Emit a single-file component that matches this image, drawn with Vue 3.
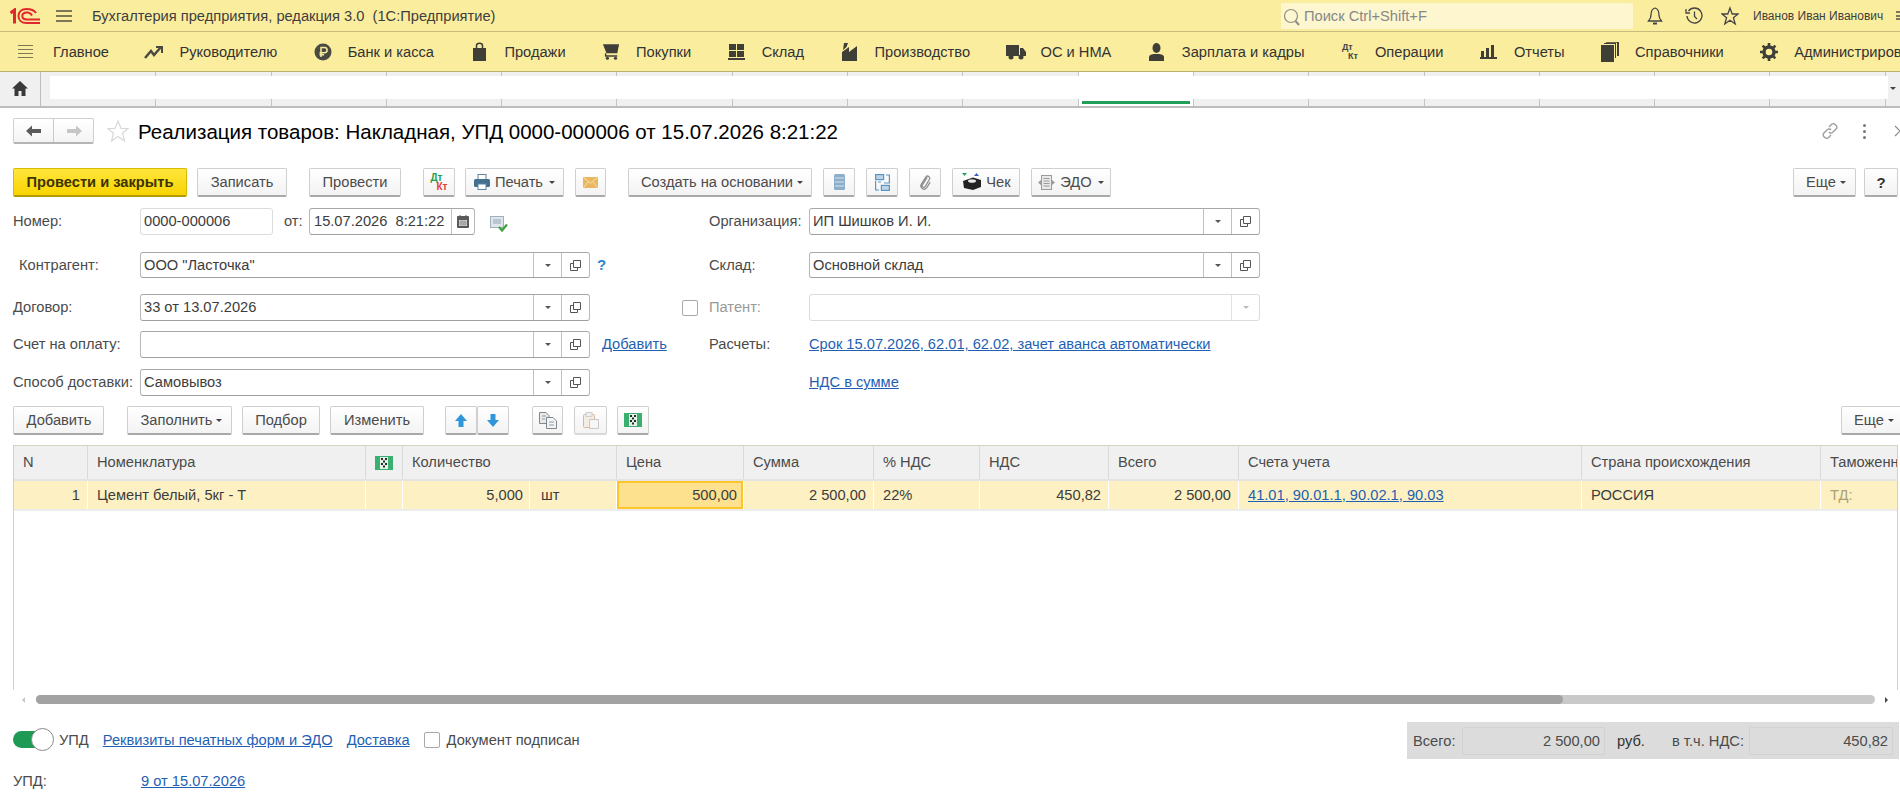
<script setup>
const navItems = [
  { label: 'Руководителю', icon: 'trend' },
  { label: 'Банк и касса', icon: 'bank' },
  { label: 'Продажи', icon: 'bag' },
  { label: 'Покупки', icon: 'cart' },
  { label: 'Склад', icon: 'grid' },
  { label: 'Производство', icon: 'factory' },
  { label: 'ОС и НМА', icon: 'truck' },
  { label: 'Зарплата и кадры', icon: 'person' },
  { label: 'Операции', icon: 'dtkt' },
  { label: 'Отчеты', icon: 'bars' },
  { label: 'Справочники', icon: 'books' },
  { label: 'Администрирование', icon: 'gear' }
]
const tabs = Array.from({ length: 16 }, (_, i) => i)
</script>

<template>
  <div class="page">
    <header class="titlebar">
      <svg class="logo" width="30" height="16" viewBox="0 0 30 16" fill="none" stroke="#e1282e">
        <path d="M0.5 5 L4.5 2 V15.5" stroke-width="3" />
        <path d="M26 5 C24 2 20 1 16.5 1 C11.5 1 8.5 4 8.5 8 C8.5 12 11.5 15 16.5 15 H30" stroke-width="2" />
        <path d="M22 7.5 C21 5.5 19 4.5 17 4.5 C14 4.5 12.3 6 12.3 8 C12.3 10 14 11.5 17 11.5 H30" stroke-width="2" />
      </svg>
      <span class="burger"><i></i><i></i><i></i></span>
      <span class="apptitle">Бухгалтерия предприятия, редакция 3.0&nbsp; (1С:Предприятие)</span>
      <div class="search">
        <svg width="18" height="20" viewBox="0 0 18 20" fill="none" stroke="#8f8f80" stroke-width="1.2"><circle cx="8" cy="9" r="6.5" /><path d="M12.5 14 L16 18" stroke-width="2" /></svg>
        <span>Поиск Ctrl+Shift+F</span>
      </div>
      <svg class="tb-ic bell" width="16" height="20" viewBox="0 0 16 20" fill="none" stroke="#444" stroke-width="1.3"><path d="M8 2 C4.5 3 4 6 4 9 C4 12 3 13 1.5 15 H14.5 C13 13 12 12 12 9 C12 6 11.5 3 8 2 Z" /><path d="M6 17.5 H10" stroke-width="2" /></svg>
      <svg class="tb-ic hist" width="18" height="20" viewBox="0 0 18 20" fill="none" stroke="#444" stroke-width="1.3"><path d="M3.5 5 A7.5 7.5 0 1 1 2 10" /><path d="M1 3 V7 H5" /><path d="M9.5 5.5 V10.5 L12 13" /></svg>
      <svg class="tb-ic star" width="18" height="20" viewBox="0 0 18 20" fill="none" stroke="#444" stroke-width="1.3"><path d="M9 2 L11.2 8 H17 L12.4 11.8 L14.2 18 L9 14.3 L3.8 18 L5.6 11.8 L1 8 H6.8 Z" /></svg>
      <span class="user">Иванов Иван Иванович</span>
      <span class="burger small"><i></i><i></i><i></i></span>
    </header>

    <nav class="navbar">
      <div class="navitem first">
        <span class="burger nav"><i></i><i></i><i></i><i></i></span>
        <span>Главное</span>
      </div>
      <div v-for="item in navItems" :key="item.label" class="navitem">
        <span class="navicon">
          <svg v-if="item.icon === 'trend'" width="20" height="16" viewBox="0 0 20 16" fill="none" stroke="#4a4a42" stroke-width="2.4"><path d="M1 14 L7 7 L10 11 L17 3" /><path d="M12 3 H18 V9" stroke-width="2" /></svg>
          <svg v-else-if="item.icon === 'bank'" width="18" height="18" viewBox="0 0 18 18"><circle cx="9" cy="9" r="8.5" fill="#4a4a42" /><path d="M7 14 V4.5 H10.5 A2.6 2.6 0 0 1 10.5 9.7 H5.5 M5.5 11.8 H10" stroke="#fbed9e" stroke-width="1.5" fill="none" /></svg>
          <svg v-else-if="item.icon === 'bag'" width="15" height="20" viewBox="0 0 15 20"><path d="M1 6 H14 V19 H1 Z" fill="#3f3f38" /><path d="M4.5 8 V3.5 C4.5 0.5 10.5 0.5 10.5 3.5 V8" stroke="#3f3f38" stroke-width="1.5" fill="none" /></svg>
          <svg v-else-if="item.icon === 'cart'" width="18" height="19" viewBox="0 0 20 20"><path d="M1 2 H19 L17 12 H5 Z" fill="#3f3f38" /><path d="M4 12 V15 H17" stroke="#3f3f38" stroke-width="1.5" fill="none" /><circle cx="6" cy="17.5" r="1.8" fill="#3f3f38" /><circle cx="15" cy="17.5" r="1.8" fill="#3f3f38" /></svg>
          <svg v-else-if="item.icon === 'grid'" width="17" height="18" viewBox="0 0 17 18" fill="#3f3f38"><rect x="1" y="1" width="7" height="6" /><rect x="9" y="1" width="7" height="6" /><rect x="1" y="8" width="7" height="6" /><rect x="9" y="8" width="7" height="6" /><rect x="0" y="15" width="17" height="2" /></svg>
          <svg v-else-if="item.icon === 'factory'" width="17" height="18" viewBox="0 0 17 18" fill="#3f3f38"><path d="M1 18 V9 L8 4 V9 L16 3 V18 Z" /><path d="M2 7 L3 0 H7 L5.5 4 Z" /></svg>
          <svg v-else-if="item.icon === 'truck'" width="20" height="16" viewBox="0 0 20 16" fill="#3f3f38"><rect x="0" y="1" width="13" height="11" /><path d="M14 4 H17 L20 8 V12 H14 Z" /><circle cx="5" cy="13" r="2.5" /><circle cx="15" cy="13" r="2.5" /></svg>
          <svg v-else-if="item.icon === 'person'" width="15" height="18" viewBox="0 0 15 18" fill="#3f3f38"><ellipse cx="7.5" cy="5" rx="4" ry="5" /><path d="M0 18 V14 C0 11.5 4 11 7.5 11 C11 11 15 11.5 15 14 V18 Z" /></svg>
          <span v-else-if="item.icon === 'dtkt'" class="dtkt nav"><b>Дт</b><b>Кт</b></span>
          <svg v-else-if="item.icon === 'bars'" width="17" height="15" viewBox="0 0 17 15" fill="#3f3f38"><rect x="1" y="7" width="3" height="6" /><rect x="6" y="4" width="3" height="9" /><rect x="11" y="1" width="3" height="12" /><rect x="0" y="13" width="17" height="2" /></svg>
          <svg v-else-if="item.icon === 'books'" width="18" height="20" viewBox="0 0 18 20" fill="#3f3f38"><rect x="0" y="3" width="13" height="17" /><path d="M3 2 V1 H15 V16 H14 V2 Z M5 0 H18 V14 H16 V0.8 H5 Z" /></svg>
          <svg v-else-if="item.icon === 'gear'" width="18" height="18" viewBox="0 0 18 18"><circle cx="9" cy="9" r="5" fill="none" stroke="#3f3f38" stroke-width="3.4" /><path d="M9 0 V18 M0 9 H18 M2.6 2.6 L15.4 15.4 M15.4 2.6 L2.6 15.4" stroke="#3f3f38" stroke-width="2.6" stroke-dasharray="3.2 11.6" /></svg>
        </span>
        <span>{{ item.label }}</span>
      </div>
    </nav>

    <div class="tabsbar">
      <div class="home">
        <svg width="16" height="15" viewBox="0 0 16 15" fill="#3a3a3a"><path d="M8 0 L16 7.5 H13.5 V15 H9.5 V10 H6.5 V15 H2.5 V7.5 H0 Z" /></svg>
      </div>
      <div v-for="t in tabs" :key="t" class="tab" :class="{ active: t === 9 }"></div>
      <div class="tabstrip"></div>
      <span class="tabcaret"></span>
    </div>

    <main class="doc">
      <div class="dochead">
        <div class="navgroup">
          <span class="ng back"><svg width="16" height="12" viewBox="0 0 16 12" fill="#5a5a5a"><path d="M0 6 L6 0.5 V4 H15 V8 H6 V11.5 Z" /></svg></span>
          <span class="ng"><svg width="16" height="12" viewBox="0 0 16 12" fill="#c6c6c6"><path d="M16 6 L10 0.5 V4 H1 V8 H10 V11.5 Z" /></svg></span>
        </div>
        <svg class="favstar" width="22" height="22" viewBox="0 0 22 22" fill="none" stroke="#d8d8d8" stroke-width="1.2"><path d="M11 1 L14 8.5 H21 L15.5 13.2 L17.5 21 L11 16.4 L4.5 21 L6.5 13.2 L1 8.5 H8 Z" /></svg>
        <h1 class="doctitle">Реализация товаров: Накладная, УПД 0000-000006 от 15.07.2026 8:21:22</h1>
        <div class="headicons">
          <svg width="18" height="18" viewBox="0 0 18 18" fill="none" stroke="#9a9a9a" stroke-width="1.3"><path d="M8 5 L11 2 C13 0.5 17 4 15.5 6.5 L11.5 10.5 C10 11.5 8.5 11 8 10" /><path d="M10 13 L7 16 C5 17.5 1 14 2.5 11.5 L6.5 7.5 C8 6.5 9.5 7 10 8" /></svg>
          <span class="kebab"><i></i><i></i><i></i></span>
          <svg class="closex" width="14" height="14" viewBox="0 0 14 14" stroke="#8a8a8a" stroke-width="1.2"><path d="M2 2 L12 12 M12 2 L2 12" /></svg>
        </div>
      </div>

      <div class="cmdbar">
        <button class="btn primary w-post">Провести и закрыть</button>
        <button class="btn w-save">Записать</button>
        <button class="btn w-run">Провести</button>
        <button class="btn icon w-dt"><span class="dtkt"><b class="g">Дт</b><b class="r">Кт</b></span></button>
        <button class="btn w-print">
          <svg width="16" height="16" viewBox="0 0 16 16"><rect x="4" y="0.5" width="8" height="5" fill="#fff" stroke="#5f86a3" /><rect x="0" y="5" width="16" height="8" rx="1.5" fill="#44708f" /><rect x="4" y="10" width="8" height="5.5" fill="#fff" stroke="#5f86a3" /></svg>
          Печать<i class="caret"></i>
        </button>
        <button class="btn icon w-mail"><svg width="15" height="11" viewBox="0 0 15 11"><rect width="15" height="11" fill="#e8b75f" /><path d="M0.5 0.5 L7.5 6 L14.5 0.5 M0.5 10.5 L5.5 4.5 M14.5 10.5 L9.5 4.5" stroke="#f8e2b0" fill="none" /></svg></button>
        <button class="btn w-create">Создать на основании<i class="caret"></i></button>
        <button class="btn icon w-ic"><svg width="11" height="16" viewBox="0 0 11 16"><rect width="11" height="16" rx="1.5" fill="#8bafca" /><path d="M1 4 H10 M1 8 H10 M1 12 H10" stroke="#d6e3ed" /></svg></button>
        <button class="btn icon w-ic2"><svg width="15" height="17" viewBox="0 0 15 17" fill="none" stroke="#5b95c1" stroke-width="1.2"><rect x="0.6" y="0.6" width="8" height="5" fill="#bcd4e6" /><rect x="6.4" y="11.4" width="8" height="5" fill="#bcd4e6" /><path d="M11 1 H14.4 V9 H9 M0.6 7 V16 H4 M3 8 H6" /></svg></button>
        <button class="btn icon w-ic3"><svg width="13" height="17" viewBox="0 0 14 20" fill="none" stroke="#8f8f8f" stroke-width="1.5"><path d="M9 4 L3.5 12.5 C2 15 5 17 6.8 14.6 L11.5 6.5 C13 3.5 9.5 1 7.5 3.5 L2 12 C0 16 5 20.5 8.5 16 L12.5 9.5" /></svg></button>
        <button class="btn w-check">
          <svg width="22" height="20" viewBox="0 0 22 20"><path d="M1 1 L6 1 L3.5 4 Z" fill="#2aa05a" /><path d="M13 4 L18 4 L15.5 1 Z" fill="#3a5cc0" /><path d="M2 9 L12 5.5 L20 8 V15 L12 18 L3 16 Z" fill="#222" /><ellipse cx="11" cy="9" rx="4" ry="1.8" fill="#e8e8e8" /></svg>
          Чек
        </button>
        <button class="btn w-edo">
          <svg width="17" height="15" viewBox="0 0 17 15" fill="none" stroke="#9b9b9b"><rect x="3.5" y="0.5" width="10" height="14" fill="#e9e9e9" /><path d="M5.5 3.5 H11.5 M5.5 6 H11.5 M5.5 8.5 H11.5 M5.5 11 H11.5" /><path d="M0 7.5 L3 5 V10 Z M17 7.5 L14 5 V10 Z" fill="#9b9b9b" stroke="none" /></svg>
          ЭДО<i class="caret"></i>
        </button>
        <span class="spacer"></span>
        <button class="btn w-more">Еще<i class="caret"></i></button>
        <button class="btn w-help"><b>?</b></button>
      </div>

      <div class="fields">
        <label class="lbl">Номер:</label>
        <div class="inline">
          <div class="inp w-num">0000-000006</div>
          <span class="lbl from">от:</span>
          <div class="inp dark w-date">
            <span class="val">15.07.2026&nbsp; 8:21:22</span>
            <span class="cell"><svg width="12" height="13" viewBox="0 0 12 13"><rect y="1" width="12" height="12" rx="1" fill="#5a5a5a" /><rect x="2" y="5" width="8" height="6" fill="#ddd" /><path d="M3 0 V3 M9 0 V3" stroke="#5a5a5a" /><path d="M4 5 V11 M6 5 V11 M8 5 V11 M2 7 H10 M2 9 H10" stroke="#777" stroke-width=".6" /></svg></span>
          </div>
          <svg class="posted" width="18" height="16" viewBox="0 0 18 16"><rect x="0.5" y="0.5" width="13" height="11" fill="#dfe5ea" stroke="#9fb0bd" /><path d="M3 3 H11 V8 H3 Z" fill="#b8c6d1" /><path d="M9 11 L12 14.5 L17 8.5" stroke="#3ba33b" stroke-width="2.2" fill="none" /></svg>
        </div>
        <span></span>
        <label class="lbl">Организация:</label>
        <div class="inp dark"><span class="val">ИП Шишков И. И.</span><span class="cell"><i class="caret dk"></i></span><span class="cell"><svg class="open" width="11" height="11" viewBox="0 0 11 11" fill="none" stroke="#555"><path d="M3.5 0.5 H10.5 V7.5 H3.5 Z M3.5 3.5 H0.5 V10.5 H7.5 V7.5" /></svg></span></div>

        <label class="lbl indent">Контрагент:</label>
        <div class="inp dark short"><span class="val">ООО "Ласточка"</span><span class="cell"><i class="caret dk"></i></span><span class="cell"><svg class="open" width="11" height="11" viewBox="0 0 11 11" fill="none" stroke="#555"><path d="M3.5 0.5 H10.5 V7.5 H3.5 Z M3.5 3.5 H0.5 V10.5 H7.5 V7.5" /></svg></span></div>
        <span class="extra q">?</span>
        <label class="lbl">Склад:</label>
        <div class="inp dark short"><span class="val">Основной склад</span><span class="cell"><i class="caret dk"></i></span><span class="cell"><svg class="open" width="11" height="11" viewBox="0 0 11 11" fill="none" stroke="#555"><path d="M3.5 0.5 H10.5 V7.5 H3.5 Z M3.5 3.5 H0.5 V10.5 H7.5 V7.5" /></svg></span></div>

        <label class="lbl">Договор:</label>
        <div class="inp dark"><span class="val">33 от 13.07.2026</span><span class="cell"><i class="caret dk"></i></span><span class="cell"><svg class="open" width="11" height="11" viewBox="0 0 11 11" fill="none" stroke="#555"><path d="M3.5 0.5 H10.5 V7.5 H3.5 Z M3.5 3.5 H0.5 V10.5 H7.5 V7.5" /></svg></span></div>
        <span class="extra"><span class="check patent"></span></span>
        <label class="lbl muted">Патент:</label>
        <div class="inp disabled"><span class="val"></span><span class="cell lightcell"><i class="caret lt"></i></span></div>

        <label class="lbl">Счет на оплату:</label>
        <div class="inp dark"><span class="val"></span><span class="cell"><i class="caret dk"></i></span><span class="cell"><svg class="open" width="11" height="11" viewBox="0 0 11 11" fill="none" stroke="#555"><path d="M3.5 0.5 H10.5 V7.5 H3.5 Z M3.5 3.5 H0.5 V10.5 H7.5 V7.5" /></svg></span></div>
        <a class="link extra add">Добавить</a>
        <label class="lbl">Расчеты:</label>
        <a class="link tall">Срок 15.07.2026, 62.01, 62.02, зачет аванса автоматически</a>

        <label class="lbl">Способ доставки:</label>
        <div class="inp dark"><span class="val">Самовывоз</span><span class="cell"><i class="caret dk"></i></span><span class="cell"><svg class="open" width="11" height="11" viewBox="0 0 11 11" fill="none" stroke="#555"><path d="M3.5 0.5 H10.5 V7.5 H3.5 Z M3.5 3.5 H0.5 V10.5 H7.5 V7.5" /></svg></span></div>
        <span></span>
        <span></span>
        <a class="link tall">НДС в сумме</a>
      </div>

      <div class="tablebar">
        <button class="btn w-add">Добавить</button>
        <button class="btn w-fill">Заполнить<i class="caret"></i></button>
        <button class="btn w-pick">Подбор</button>
        <button class="btn w-edit">Изменить</button>
        <div class="pair">
          <button class="btn icon"><svg width="12" height="13" viewBox="0 0 12 13" fill="#2f97d9"><path d="M6 0 L12 7 H8.5 V13 H3.5 V7 H0 Z" /></svg></button>
          <button class="btn icon"><svg width="12" height="13" viewBox="0 0 12 13" fill="#2f97d9"><path d="M6 13 L12 6 H8.5 V0 H3.5 V6 H0 Z" /></svg></button>
        </div>
        <button class="btn icon w-copy"><svg width="18" height="17" viewBox="0 0 18 17" stroke="#7d8790"><path d="M0.5 0.5 H7 L10 3.5 V11.5 H0.5 Z" fill="#e9e9e9" /><path d="M7.5 5.5 H14 L17.5 9 V16.5 H7.5 Z" fill="#f4f4f4" /><path d="M3 4 H7 M3 7 H6 M10 10 H15 M10 13 H15" stroke-width=".8" /></svg></button>
        <button class="btn icon w-paste"><svg width="16" height="17" viewBox="0 0 16 17"><rect x="0.5" y="2.5" width="11" height="13" rx="1" fill="#f5ede4" stroke="#d9b79a" /><rect x="3" y="0.5" width="6" height="4" fill="#eee" stroke="#d0d0d0" /><path d="M6.5 7.5 H15.5 V16.5 H6.5 Z" fill="#f6f6f6" stroke="#c8c8c8" /></svg></button>
        <button class="btn icon w-code"><svg class="mark" width="18" height="14" viewBox="0 0 18 14"><rect width="18" height="14" fill="#39b06f" /><rect x="5" y="1" width="8" height="12" fill="#e4f0e8" /><path d="M6 2 H8 V4 H6 Z M10 2 H12 V4 H10 Z M8 4.5 H10 V6.5 H8 Z M6 7 H8 V9 H6 Z M10 7 H12 V9 H10 Z M8 9.5 H10 V11.5 H8 Z" fill="#1f2f27" /></svg></button>
        <span class="spacer"></span>
        <button class="btn w-more2">Еще<i class="caret"></i></button>
      </div>

      <section class="table">
        <div class="thead">
          <div class="th">N</div>
          <div class="th">Номенклатура</div>
          <div class="th ctr"><svg class="mark" width="18" height="14" viewBox="0 0 18 14"><rect width="18" height="14" fill="#39b06f" /><rect x="5" y="1" width="8" height="12" fill="#e4f0e8" /><path d="M6 2 H8 V4 H6 Z M10 2 H12 V4 H10 Z M8 4.5 H10 V6.5 H8 Z M6 7 H8 V9 H6 Z M10 7 H12 V9 H10 Z M8 9.5 H10 V11.5 H8 Z" fill="#1f2f27" /></svg></div>
          <div class="th">Количество</div>
          <div class="th">Цена</div>
          <div class="th">Сумма</div>
          <div class="th">% НДС</div>
          <div class="th">НДС</div>
          <div class="th">Всего</div>
          <div class="th">Счета учета</div>
          <div class="th">Страна происхождения</div>
          <div class="th">Таможенная декларация</div>
        </div>
        <div class="trow">
          <div class="td r">1</div>
          <div class="td">Цемент белый, 5кг - Т</div>
          <div class="td"></div>
          <div class="td qty"><span class="q1">5,000</span><span class="q2">шт</span></div>
          <div class="td r sel">500,00</div>
          <div class="td r">2 500,00</div>
          <div class="td">22%</div>
          <div class="td r">450,82</div>
          <div class="td r">2 500,00</div>
          <div class="td"><a class="link">41.01, 90.01.1, 90.02.1, 90.03</a></div>
          <div class="td">РОССИЯ</div>
          <div class="td faded">ТД:</div>
        </div>
      </section>

      <div class="hscroll">
        <i class="arrow l"></i>
        <div class="track"><div class="thumb"></div></div>
        <i class="arrow rt"></i>
      </div>

      <div class="footer">
        <div class="footleft">
          <span class="toggle"><span class="knob"></span></span>
          <span class="ftxt">УПД</span>
          <a class="link">Реквизиты печатных форм и ЭДО</a>
          <a class="link">Доставка</a>
          <span class="check"></span>
          <span class="ftxt tight">Документ подписан</span>
        </div>
        <div class="totals">
          <span class="tl t1">Всего:</span>
          <span class="tv w1">2 500,00</span>
          <span class="rub">руб.</span>
          <span class="tl vat">в т.ч. НДС:</span>
          <span class="tv w2">450,82</span>
        </div>
      </div>
      <div class="upd">
        <span class="lbl">УПД:</span>
        <a class="link">9 от 15.07.2026</a>
      </div>
    </main>
  </div>
</template>

<style>
html, body { margin: 0; overflow: hidden; background: #fff; }
</style>

<style scoped>
.page {
  width: 1900px; height: 797px; overflow: hidden; background: #fff;
  display: flex; flex-direction: column;
  font: 14.67px "Liberation Sans", Arial, sans-serif; color: #4b4b4b;
}
a { cursor: pointer; }
i { font-style: normal; display: block; }

.titlebar {
  height: 31px; flex: none; background: #fbed9e; border-bottom: 1px solid #c4bb7c;
  display: flex; align-items: center; color: #3e3e3e; position: relative;
}
.logo { margin-left: 10px; flex: none; }
.burger { display: flex; flex-direction: column; justify-content: space-between; width: 16px; height: 12px; margin-left: 16px; flex: none; }
.burger i { height: 2px; background: #7d7856; }
.burger.nav { margin: 0; height: 14px; width: 15px; }
.burger.nav i { height: 1.5px; }
.burger.small { margin-left: 13px; width: 8px; height: 9px; overflow: hidden; }
.apptitle { margin-left: 20px; width: 1189px; white-space: nowrap; flex: none; }
.search {
  width: 352px; height: 26px; background: #fdf6cf; border-radius: 2px; display: flex; align-items: center;
  margin-left: 0; color: #888; flex: none;
}
.search svg { margin: 2px 3px 0 2px; }
.bell { margin-left: 14px; }
.hist { margin-left: 22px; }
.star { margin-left: 18px; }
.tb-ic { flex: none; }
.user { margin-left: 14px; font-size: 12px; white-space: nowrap; flex: none; }

.navbar {
  height: 40px; flex: none; background: #fbed9e; border-bottom: 1px solid #b9b170; box-sizing: border-box;
  display: flex; align-items: center; padding-left: 18px; gap: 35.45px; white-space: nowrap; color: #333;
}
.navitem { display: flex; align-items: center; flex: none; }
.navitem.first { gap: 20px; }
.navicon { width: 20px; height: 20px; margin-right: 15px; display: flex; align-items: center; justify-content: center; }

.tabsbar {
  height: 36px; flex: none; display: flex; background: #f0f0f0; border-bottom: 2px solid #bdbdbd; box-sizing: border-box;
  position: relative;
}
.home { width: 40px; border-right: 1px solid #bdbdbd; display: flex; align-items: center; justify-content: center; flex: none; padding-bottom: 2px; }
.tab { width: 114.3px; flex: none; border-right: 1px solid #c4c4c4; position: relative; }
.tab.active { background: #fff; }
.tab.active::after { content: ""; position: absolute; left: 3px; right: 3px; bottom: 2px; height: 3px; background: #1ea05a; }
.tabstrip { position: absolute; left: 50px; top: 4px; width: 1838px; height: 23px; background: #fff; }
.tabcaret { position: absolute; right: 4px; top: 15px; border: 3px solid transparent; border-top-color: #444; }

.doc { flex: 1; display: flex; flex-direction: column; min-height: 0; padding-left: 13px; position: relative; }
.dochead { height: 60px; display: flex; align-items: flex-start; padding-top: 10px; box-sizing: border-box; flex: none; }
.navgroup {
  display: flex; width: 81px; height: 26px; box-sizing: border-box; border: 1px solid #d0d0d0; border-bottom: 2px solid #b5b5b5;
  border-radius: 2px; background: linear-gradient(#fff, #f4f4f4); flex: none;
}
.ng { flex: 1; display: flex; align-items: center; justify-content: center; }
.ng.back { border-right: 1px solid #c9c9c9; }
.favstar { margin-left: 13px; margin-top: 2px; flex: none; }
.doctitle { margin: 2px 0 0 9px; font-size: 20.5px; line-height: 23px; font-weight: 400; color: #000; white-space: nowrap; flex: none; }
.headicons { display: flex; align-items: center; gap: 0; position: absolute; right: 0; top: 14px; }
.kebab { display: flex; flex-direction: column; gap: 3px; margin: 0 0 0 24px; width: 3px; }
.kebab i { width: 3px; height: 3px; background: #777; border-radius: 50%; }
.closex { margin-left: 27px; margin-right: -7px; }

.btn {
  box-sizing: border-box; height: 29px; padding: 0; display: inline-flex; align-items: center; justify-content: center; gap: 5px;
  font: inherit; color: #4b4b4b; border: 1px solid #cfcfcf; border-bottom: 2px solid #a9a9a9; border-radius: 2px;
  background: linear-gradient(#fff, #f3f3f3); flex: none; white-space: nowrap;
}
.btn.primary { background: linear-gradient(#ffe63d, #f8d400); border-color: #d9b800; border-bottom-color: #b59a00; color: #3b3400; font-weight: 700; }
.caret { width: 0; height: 0; border: 3px solid transparent; border-top: 3px solid #444; border-bottom: 0; margin-left: 1px; }
.caret.dk { border-top-color: #555; }
.caret.lt { border-top-color: #bbb; }
.cmdbar { height: 29px; display: flex; flex: none; margin-top: 0; width: 1885px; }
.w-post { width: 174px; }
.w-save { width: 90px; margin-left: 10px; }
.w-run { width: 92px; margin-left: 22px; }
.w-dt { width: 32px; margin-left: 22px; }
.w-print { width: 99px; margin-left: 10px; }
.w-mail { width: 31px; margin-left: 11px; }
.w-create { width: 184px; margin-left: 22px; padding-left: 4px; gap: 3px; }
.w-ic { width: 32px; margin-left: 11px; }
.w-ic2 { width: 32px; margin-left: 11px; }
.w-ic3 { width: 32px; margin-left: 11px; }
.w-check { width: 68px; margin-left: 11px; gap: 3px; }
.w-edo { width: 80px; margin-left: 11px; }
.spacer { flex: 1; }
.w-more { width: 63px; padding-left: 3px; gap: 3px; }
.w-help { width: 34px; margin-left: 8px; color: #333; font-size: 15px; }
.dtkt { display: flex; flex-direction: column; font-size: 10px; line-height: 9px; align-items: flex-start; }
.dtkt b:last-child { margin-left: 6px; }
.dtkt .g { color: #24a148; }
.dtkt .r { color: #e2413a; }
.dtkt.nav { color: #444; font-size: 9px; }

.fields {
  display: grid; margin-top: 11px; flex: none;
  grid-template-columns: 127px 450px 119px 100px 451px;
  grid-template-rows: 44px 42px 37px 38px 27px;
  width: 1247px;
}
.lbl { line-height: 27px; color: #4b4b4b; white-space: nowrap; }
.lbl.indent { padding-left: 6px; }
.lbl.muted { color: #999; }
.inline { display: flex; align-items: flex-start; }
.inp {
  box-sizing: border-box; height: 27px; border: 1px solid #d2d2d2; border-radius: 3px; display: flex; align-items: stretch; line-height: 25px; color: #3c3c3c;
  background: #fff;
}
.inp.short { height: 26px; line-height: 24px; }
.inp.dark { border-color: #a8a8a8 #b8b8b8 #a0a0a0; }
.inp.disabled { border-color: #dcdcdc; }
.val { flex: 1; padding-left: 3px; white-space: nowrap; overflow: hidden; }
.cell { width: 27px; border-left: 1px solid #c0c0c0; display: flex; align-items: center; justify-content: center; flex: none; }
.lightcell { border-left-color: #e2e2e2; }
.w-num { width: 133px; padding-left: 3px; border-color: #dcdcdc; box-shadow: none; }
.from { margin-left: 11px; width: 25px; }
.w-date { width: 166px; }
.w-date .val { padding-left: 4px; }
.w-date .cell { width: 22px; }
.posted { margin: 8px 0 0 15px; }
.extra { line-height: 27px; }
.q { color: #2a86d0; font-weight: 700; padding-left: 7px; line-height: 26px; font-size: 15px; }
.link { color: #1f5fb4; text-decoration: underline; white-space: nowrap; }
.add { padding-left: 12px; }
.tall { line-height: 27px; }
.check { display: inline-block; width: 14px; height: 14px; border: 1px solid #a9a9a9; border-radius: 2px; box-sizing: content-box; background: #fff; flex: none; }
.patent { margin: 6px 0 0 92px; }

.tablebar { height: 29px; display: flex; flex: none; margin-top: 10px; width: 1885px; }
.w-add { width: 91px; padding-left: 1px; }
.w-fill { width: 105px; margin-left: 23px; padding-left: 4px; gap: 3px; }
.w-pick { width: 78px; margin-left: 10px; }
.w-edit { width: 94px; margin-left: 10px; }
.pair { display: flex; margin-left: 21px; }
.pair .btn { width: 32px; }
.w-copy { width: 31px; margin-left: 23px; }
.w-paste { width: 33px; margin-left: 11px; border-bottom-color: #d8d8d8; }
.w-code { width: 32px; margin-left: 10px; }
.w-more2 { width: 63px; margin-right: -6px; padding-left: 3px; gap: 3px; }
.mark { display: block; }

.table { margin-top: 10px; height: 245px; width: 1885px; box-sizing: border-box; border: 1px solid #d6d2c0; border-bottom: 0; overflow: hidden; flex: none; }
.thead, .trow { display: grid; grid-template-columns: 74px 278px 37px 214px 127px 130px 106px 129px 130px 343px 239px 77px; }
.thead { height: 33px; background: #f0f0f0; border-bottom: 2px solid #e4e4e4; box-sizing: content-box; }
.th { padding-left: 9px; line-height: 32px; border-right: 1px solid #dadada; white-space: nowrap; overflow: hidden; color: #4b4b4b; }
.th.ctr { padding: 0; display: flex; align-items: center; justify-content: center; }
.trow { height: 28px; background: #fdf1c3; margin-bottom: 2px; box-shadow: 0 2px 0 #ececec; }
.td { line-height: 28px; padding: 0 7px 0 9px; border-right: 1px solid #fff; white-space: nowrap; overflow: hidden; color: #3c3c3c; box-sizing: border-box; }
.td.r { text-align: right; }
.td.sel { background: #fde18f; box-shadow: inset 0 0 0 2px #fbc52c; margin-right: 0; padding-right: 6px; }
.td.qty { display: flex; padding: 0; }
.q1 { width: 127px; padding-right: 6px; box-sizing: border-box; text-align: right; border-right: 1px solid #fff; }
.q2 { padding-left: 11px; }
.faded { color: #a8a272; }

.hscroll { display: flex; align-items: center; margin-top: 5px; height: 9px; flex: none; width: 1885px; }
.arrow { width: 0; height: 0; border: 3px solid transparent; flex: none; }
.arrow.l { border-right-color: #c6c6c6; margin-left: 9px; border-left: 0; }
.arrow.rt { border-left-color: #444; margin-left: 10px; border-right: 0; }
.track { width: 1839px; height: 9px; border-radius: 5px; background: #c9c9c9; margin-left: 11px; flex: none; }
.thumb { width: 1527px; height: 9px; border-radius: 5px; background: #a2a2a2; }

.footer { display: flex; justify-content: space-between; align-items: center; margin-top: 18px; height: 37px; flex: none; width: 1886px; }
.footleft { display: flex; align-items: center; white-space: nowrap; margin-bottom: 2px; }
.toggle { width: 41px; height: 23px; position: relative; display: block; flex: none; }
.toggle::before { content: ""; position: absolute; left: 0; top: 3px; width: 36px; height: 17px; border-radius: 9px; background: #1f9a55; }
.knob { position: absolute; right: 0; top: 0; width: 21px; height: 21px; border-radius: 50%; background: #fff; border: 1px solid #8a8a8a; }
.ftxt { margin-left: 5px; }
.footleft .link:nth-of-type(1) { margin-left: 14px; }
.footleft .link:nth-of-type(2) { margin-left: 14px; }
.footleft .check { margin-left: 14px; }
.ftxt.tight { margin-left: 7px; }
.totals { width: 492px; height: 37px; background: #dcdcdc; display: flex; align-items: center; box-sizing: border-box; padding-left: 6px; flex: none; white-space: nowrap; }
.t1 { width: 49px; flex: none; }
.tv { box-sizing: border-box; height: 28px; line-height: 26px; border: 1px solid #d2d2d2; border-radius: 2px; text-align: right; padding-right: 4px; flex: none; }
.w1 { width: 143px; }
.rub { margin-left: 12px; color: #333; width: 55px; flex: none; }
.vat { width: 77px; flex: none; }
.w2 { width: 144px; }
.upd { display: flex; margin-top: 9px; line-height: 27px; flex: none; }
.upd .lbl { width: 128px; }
</style>
